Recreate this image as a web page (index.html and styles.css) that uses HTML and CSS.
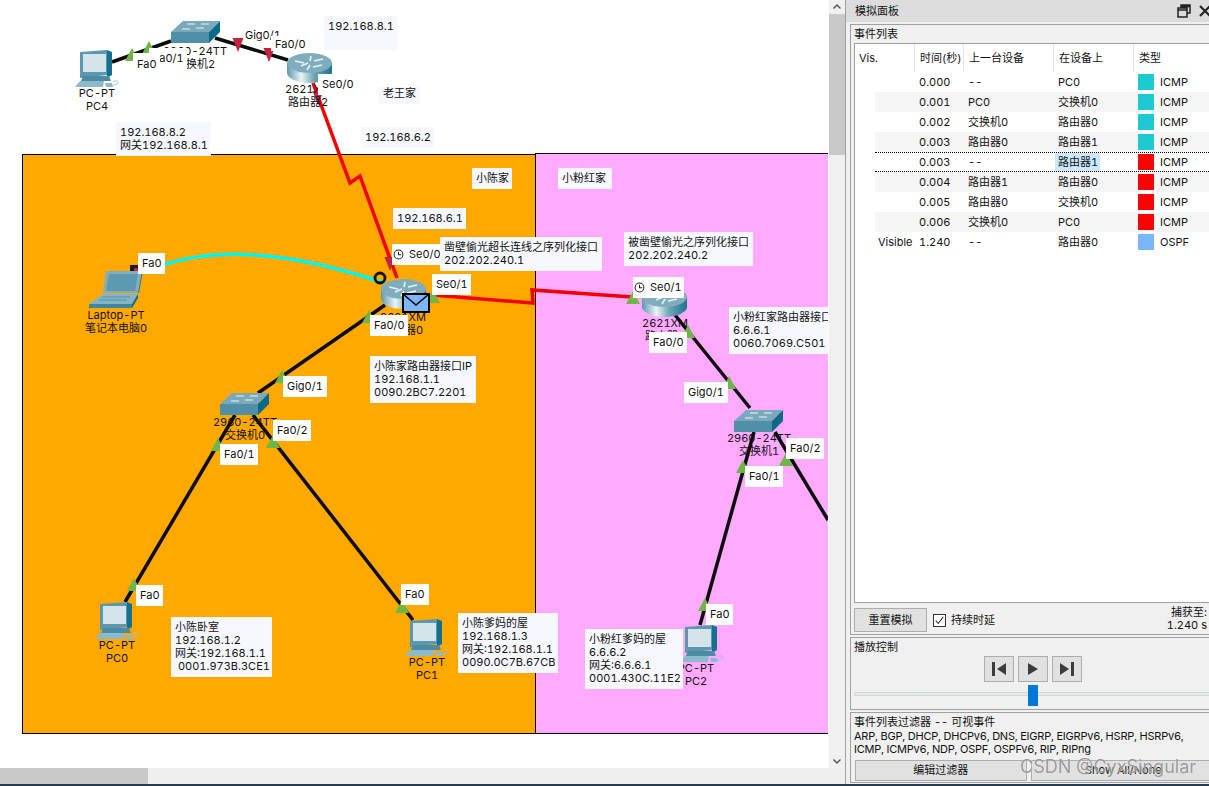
FILE: index.html
```html
<!DOCTYPE html>
<html lang="zh">
<head>
<meta charset="utf-8">
<title>模拟面板</title>
<link rel="stylesheet" href="styles.css">
</head>
<body>
<div class="app">
  <div class="work">
    <div class="work-row">
      <div class="canvas">
        <div class="room room-orange"></div>
        <div class="room room-pink"></div>
        <svg class="net" width="828" height="768" viewBox="0 0 828 768">
          <defs>
            <linearGradient id="cyl" x1="0" x2="1" y1="0" y2="0">
              <stop offset="0" stop-color="#5f98aa"/>
              <stop offset=".32" stop-color="#eaf4f6"/>
              <stop offset=".6" stop-color="#6fa6b6"/>
              <stop offset="1" stop-color="#1f7390"/>
            </linearGradient>
            <polygon id="up" points="-7,6 7,6 0,-7" fill="#6fb648"/>
            <polygon id="down" points="-5.500,-7 5.500,-7 0,7" fill="#c3233b"/>
            <symbol id="router" viewBox="0 0 45 30">
              <path d="M0 10v10c0 5 10 10 22.5 10S45 25 45 20V10z" fill="url(#cyl)"/>
              <ellipse cx="22.500" cy="10" rx="22.500" ry="10" fill="#7fadbd"/>
              <path d="M8 8l9 2M14 13l7-3M27 8l9-2M26 14l9-2M24 3l-1 5M23 12l-3 5" stroke="#e9f2f4" stroke-width="1.600" fill="none"/>
            </symbol>
            <symbol id="switch" viewBox="0 0 49 23">
              <polygon points="0,12 12,1 49,1 38,12" fill="#79a9bb"/>
              <polygon points="0,12 38,12 38,23 0,23" fill="#4f90a8"/>
              <polygon points="38,12 49,1 49,12 38,23" fill="#0b6a88"/>
              <path d="M16 4h8M30 4h8M11 9h8M25 8h8" stroke="#eef5f7" stroke-width="1.200"/>
            </symbol>
            <symbol id="pc" viewBox="0 0 44 37">
              <polygon points="5,2 32,0 32,25 5,28" fill="#5b97ad"/>
              <polygon points="32,0 37,2 37,25 32,28" fill="#14708e"/>
              <rect x="8" y="4" width="23" height="18" fill="#d5e3ea"/>
              <polygon points="8,26 34,26 36,31 6,31" fill="#4b8ba3"/>
              <polygon points="5,31 29,31 28,37 0,37" fill="#8dbacb"/>
              <path d="M30 33h7l1 4h-7z" fill="#8dbacb"/>
              <path d="M38 32c3-2 6-1 5 1s-3 1-5 2" stroke="#9fc3d0" fill="none"/>
            </symbol>
            <symbol id="laptop" viewBox="0 0 54 37">
              <polygon points="17,0 53,0 49,22 14,22" fill="#80aebf"/>
              <polygon points="20,3 49,3 46,20 17,20" fill="#5c9ab1"/>
              <polygon points="53,0 54,0 50,22 49,22" fill="#1d7a97"/>
              <polygon points="14,23 49,23 43,33 0,33" fill="#86b4c5"/>
              <polygon points="0,33 43,33 43,37 0,37" fill="#3f86a0"/>
              <polygon points="43,33 49,23 49,27 43,37" fill="#0e6c8a"/>
              <path d="M13 26h28M10 29h28" stroke="#4f90a8"/>
            </symbol>
          </defs>

          <path class="wire" d="M112 62L171 41M215 38L288 60M385 305L258 393M235 415L125 602M253 415L413 620M675 315L750 408M754 432L700 625M775 432L828 520"/>
          <path class="serial" d="M313 83L350 183L360 176L397 278M432 295L533 303L532 290L632 297"/>
          <path class="wifi" d="M160 266Q245 236 384 283"/>

          <use href="#up" x="132" y="55"/>
          <use href="#up" x="149" y="48"/>
          <use href="#down" x="238" y="45"/>
          <use href="#down" x="269" y="55"/>
          <use href="#down" x="318" y="98"/>
          <use href="#down" x="390" y="264"/>
          <use href="#up" x="433" y="297"/>
          <use href="#up" x="369" y="317"/>
          <use href="#up" x="633" y="298"/>
          <use href="#up" x="688" y="332"/>
          <use href="#up" x="729" y="383"/>
          <use href="#up" x="743" y="467"/>
          <use href="#up" x="786" y="460"/>
          <use href="#up" x="282" y="377"/>
          <use href="#up" x="218" y="445"/>
          <use href="#up" x="273" y="442"/>
          <use href="#up" x="134" y="585"/>
          <use href="#up" x="402" y="607"/>
          <use href="#up" x="705" y="605"/>

          <rect x="130" y="265" width="9" height="7" fill="#1a1a1a"/>
          <rect x="134" y="268" width="5" height="4" fill="#d0213c"/>
          <use href="#pc" x="75" y="50" width="44" height="37"/>
          <use href="#pc" x="95" y="602" width="44" height="37"/>
          <use href="#pc" x="405" y="619" width="44" height="37"/>
          <use href="#pc" x="680" y="625" width="44" height="37"/>
          <use href="#laptop" x="89" y="271" width="54" height="37"/>
          <use href="#switch" x="171" y="20" width="49" height="23"/>
          <use href="#switch" x="220" y="392" width="49" height="23"/>
          <use href="#switch" x="734" y="409" width="49" height="23"/>
          <use href="#router" x="287" y="53" width="45" height="30"/>
          <use href="#router" x="381" y="279" width="45" height="30"/>
          <use href="#router" x="642" y="287" width="45" height="30"/>
          <circle cx="380" cy="278" r="5" fill="none" stroke="#111" stroke-width="2.800"/>
        </svg>

        <div class="dev d-pc4">PC-PT<br>PC4</div>
        <div class="dev d-sw2">2960-24TT<br>交换机2</div>
        <div class="dev d-r2">2621XM<br>路由器2</div>
        <div class="dev d-lap">Laptop-PT<br>笔记本电脑0</div>
        <div class="dev d-r0">2621XM<br>路由器0</div>
        <div class="dev d-r1">2621XM<br>路由器1</div>
        <div class="dev d-sw0">2960-24TT<br>交换机0</div>
        <div class="dev d-sw1">2960-24TT<br>交换机1</div>
        <div class="dev d-pc0">PC-PT<br>PC0</div>
        <div class="dev d-pc1">PC-PT<br>PC1</div>
        <div class="dev d-pc2">PC-PT<br>PC2</div>

        <div class="port p-top1">Fa0/1</div>
        <div class="port p-top0">Fa0</div>
        <div class="port p-topg">Gig0/1</div>
        <div class="port p-topf">Fa0/0</div>
        <div class="port p-tops">Se0/0</div>
        <div class="port p-lap">Fa0</div>
        <div class="port p-r0s0"><svg class="clock" viewBox="0 0 12 12" width="11" height="11"><circle cx="6" cy="6" r="4.800"/><path d="M6 3v3.200h3"/></svg>Se0/0</div>
        <div class="port p-r0s1">Se0/1</div>
        <div class="port p-r0f">Fa0/0</div>
        <div class="port p-r1s"><svg class="clock" viewBox="0 0 12 12" width="11" height="11"><circle cx="6" cy="6" r="4.800"/><path d="M6 3v3.200h3"/></svg>Se0/1</div>
        <div class="port p-r1f">Fa0/0</div>
        <div class="port p-r1g">Gig0/1</div>
        <div class="port p-s1f2">Fa0/2</div>
        <div class="port p-s1f1">Fa0/1</div>
        <div class="port p-s0g">Gig0/1</div>
        <div class="port p-s0f2">Fa0/2</div>
        <div class="port p-s0f1">Fa0/1</div>
        <div class="port p-pc0">Fa0</div>
        <div class="port p-pc1">Fa0</div>
        <div class="port p-pc2">Fa0</div>

        <div class="note n-ip81">192.168.8.1<br>&nbsp;</div>
        <div class="note n-wang">老王家</div>
        <div class="note n-ip62">192.168.6.2</div>
        <div class="note n-pc4">192.168.8.2<br>网关192.168.8.1</div>
        <div class="note n-chen">小陈家</div>
        <div class="note n-pink">小粉红家</div>
        <div class="note n-ip61">192.168.6.1</div>
        <div class="note n-ser0">凿壁偷光超长连线之序列化接口<br>202.202.240.1</div>
        <div class="note n-rchen">小陈家路由器接口IP<br>192.168.1.1<br>0090.2BC7.2201</div>
        <div class="note n-ser1">被凿壁偷光之序列化接口<br>202.202.240.2</div>
        <div class="note n-rpink">小粉红家路由器接口IP<br>6.6.6.1<br>0060.7069.C501</div>
        <div class="note n-pc0">小陈卧室<br>192.168.1.2<br>网关:192.168.1.1<br>&nbsp;0001.973B.3CE1</div>
        <div class="note n-pc1">小陈爹妈的屋<br>192.168.1.3<br>网关:192.168.1.1<br>0090.0C7B.67CB</div>
        <div class="note n-pc2">小粉红爹妈的屋<br>6.6.6.2<br>网关:6.6.6.1<br>0001.430C.11E2</div>

        <svg class="mail" viewBox="0 0 28 20" width="28" height="20"><rect x="1" y="1" width="26" height="18" fill="#7db6fb" stroke="#000" stroke-width="2"/><path d="M1 1l13 11L27 1" fill="none" stroke="#000" stroke-width="1.500"/></svg>
      </div>
      <div class="vscroll">
        <svg class="arrow" viewBox="0 0 16 14" width="16" height="14"><path d="M4.500 8.500L8 5l3.500 3.500"/></svg>
        <div class="vthumb"></div>
        <div class="fill"></div>
        <svg class="arrow" viewBox="0 0 16 14" width="16" height="14"><path d="M4.500 5.500L8 9l3.500-3.500"/></svg>
      </div>
    </div>
    <div class="hscroll"><div class="hthumb"></div></div>
  </div>

  <aside class="panel">
    <div class="titlebar">
      <span>模拟面板</span>
      <span class="win-btns">
        <svg viewBox="0 0 14 14" width="14" height="14"><path d="M4 4V1h9v8h-3M1 4h9v9H1zM1 6h9M4 2.500h9" fill="none" stroke="#222" stroke-width="1.500"/></svg>
        <svg viewBox="0 0 14 14" width="14" height="14"><path d="M2 2l10 10M12 2L2 12" stroke="#222" stroke-width="2.200"/></svg>
      </span>
    </div>

    <section class="group group-events">
      <div class="group-title">事件列表</div>
      <div class="events">
        <div class="ev-head">
          <span class="h-vis">Vis.</span><span>时间(秒)</span><span>上一台设备</span><span>在设备上</span><span>类型</span>
        </div>
        <div class="ev-row"><span></span><span>0.000</span><span>--</span><span>PC0</span><span class="kind"><i class="sw sw-teal"></i>ICMP</span></div>
        <div class="ev-row alt"><span></span><span>0.001</span><span>PC0</span><span>交换机0</span><span class="kind"><i class="sw sw-teal"></i>ICMP</span></div>
        <div class="ev-row"><span></span><span>0.002</span><span>交换机0</span><span>路由器0</span><span class="kind"><i class="sw sw-teal"></i>ICMP</span></div>
        <div class="ev-row alt"><span></span><span>0.003</span><span>路由器0</span><span>路由器1</span><span class="kind"><i class="sw sw-teal"></i>ICMP</span></div>
        <div class="ev-row sel"><span></span><span>0.003</span><span>--</span><span><b class="hl">路由器1</b></span><span class="kind"><i class="sw sw-red"></i>ICMP</span></div>
        <div class="ev-row alt"><span></span><span>0.004</span><span>路由器1</span><span>路由器0</span><span class="kind"><i class="sw sw-red"></i>ICMP</span></div>
        <div class="ev-row"><span></span><span>0.005</span><span>路由器0</span><span>交换机0</span><span class="kind"><i class="sw sw-red"></i>ICMP</span></div>
        <div class="ev-row alt"><span></span><span>0.006</span><span>交换机0</span><span>PC0</span><span class="kind"><i class="sw sw-red"></i>ICMP</span></div>
        <div class="ev-row"><span class="vis">Visible</span><span>1.240</span><span>--</span><span>路由器0</span><span class="kind"><i class="sw sw-blue"></i>OSPF</span></div>
      </div>
      <div class="ev-foot">
        <button class="btn btn-reset">重置模拟</button>
        <label class="check"><span class="box"><svg viewBox="0 0 13 13" width="11" height="11"><path d="M2 6.500l3 3.500 6-8" fill="none" stroke="#222" stroke-width="1.200"/></svg></span>持续时延</label>
        <div class="capture">捕获至:<br>1.240 s</div>
      </div>
    </section>

    <section class="group group-play">
      <div class="group-title">播放控制</div>
      <div class="play-btns">
        <button class="pbtn"><svg viewBox="0 0 16 16" width="16" height="16"><path d="M1 1h3v14H1zM15 2v12L6 8z" fill="#3c3c3c"/></svg></button>
        <button class="pbtn"><svg viewBox="0 0 16 16" width="16" height="16"><path d="M3 2v12l10-6z" fill="#3c3c3c"/></svg></button>
        <button class="pbtn"><svg viewBox="0 0 16 16" width="16" height="16"><path d="M12 1h3v14h-3zM1 2v12l9-6z" fill="#3c3c3c"/></svg></button>
      </div>
      <div class="slider"><div class="track"></div><div class="thumb"></div></div>
    </section>

    <section class="group group-filter">
      <div class="group-title">事件列表过滤器 -- 可视事件</div>
      <div class="filter-text">ARP, BGP, DHCP, DHCPv6, DNS, EIGRP, EIGRPv6, HSRP, HSRPv6,<br>ICMP, ICMPv6, NDP, OSPF, OSPFv6, RIP, RIPng</div>
      <div class="filter-btns">
        <button class="btn btn-edit">编辑过滤器</button>
        <button class="btn btn-show">Show All/None</button>
      </div>
    </section>
    <div class="watermark">CSDN @CyxSingular</div>
  </aside>
</div>
<div class="taskbar"></div>
</body>
</html>
```

FILE: styles.css
```css
* { box-sizing: border-box; }
html, body { margin: 0; padding: 0; height: 786px; overflow: hidden; background: #fff; }
body, button {
  font-family: Inter, "Noto Sans CJK SC", sans-serif;
  font-size: 11px;
  line-height: 13px;
  color: #111;
  font-feature-settings: "tnum";
}
.app { display: flex; height: 784px; }
.taskbar { height: 2px; background: #2b3a4c; }

/* workspace */
.work { width: 845px; flex: none; display: flex; flex-direction: column; }
.work-row { display: flex; height: 768px; }
.canvas { position: relative; width: 828px; height: 768px; margin-right: 1px; overflow: hidden; background: #fff; }
.room { position: absolute; border: 1px solid #000; }
.room-orange { left: 22px; top: 154px; width: 514px; height: 580px; background: #ffa900; }
.room-pink { left: 535px; top: 153px; width: 310px; height: 581px; background: #ffaaff; }
.net { position: absolute; left: 0; top: 0; }
.wire, .serial, .wifi { fill: none; }
.wire { stroke: #0c0c0c; stroke-width: 3.5; }
.serial { stroke: #f50000; stroke-width: 3.5; }
.wifi { stroke: #00f5f0; stroke-width: 3.5; }

.vscroll { width: 16px; background: #f0f0f0; display: flex; flex-direction: column; }
.vthumb { height: 141px; background: #c9c9c9; }
.fill { flex: 1; }
.arrow { flex: none; fill: none; stroke: #505050; stroke-width: 1.4; }
.hscroll { height: 16px; background: #efefef; }
.hthumb { width: 148px; height: 100%; background: #c9c9c9; }

/* canvas text */
.dev { position: absolute; width: 100px; text-align: center; white-space: nowrap; }
.d-pc4 { left: 47px; top: 87px; }
.d-sw2 { left: 145px; top: 45px; }
.d-r2 { left: 258px; top: 83px; }
.d-lap { left: 66px; top: 309px; }
.d-r0 { left: 353px; top: 311px; }
.d-r1 { left: 615px; top: 317px; }
.d-sw0 { left: 195px; top: 416px; }
.d-sw1 { left: 709px; top: 432px; }
.d-pc0 { left: 67px; top: 639px; }
.d-pc1 { left: 377px; top: 656px; }
.d-pc2 { left: 646px; top: 662px; }

.port { position: absolute; height: 21px; padding: 4px; background: #fff; white-space: nowrap; display: flex; }
.clock { flex: none; margin: 1px 5px 0 0; fill: none; stroke: #222; stroke-width: 1.1; }
.p-top0 { left: 133px; top: 53px; width: 27px; padding-top: 5px; }
.p-top1 { left: 149px; top: 48px; width: 38px; }
.p-topg { left: 241px; top: 25px; width: 44px; background: none; }
.p-topf { left: 271px; top: 36px; width: 38px; height: 15px; padding-top: 2px; }
.p-tops { left: 318px; top: 74px; width: 38px; }
.p-lap { left: 138px; top: 253px; width: 27px; }
.p-r0s0 { left: 392px; top: 244px; width: 48px; padding-left: 1px; }
.p-r0s1 { left: 432px; top: 274px; width: 39px; }
.p-r0f { left: 370px; top: 315px; width: 38px; }
.p-r1s { left: 633px; top: 277px; width: 51px; padding-left: 1px; }
.p-r1f { left: 649px; top: 332px; width: 38px; }
.p-r1g { left: 684px; top: 382px; width: 44px; }
.p-s1f2 { left: 786px; top: 438px; width: 38px; }
.p-s1f1 { left: 745px; top: 466px; width: 38px; }
.p-s0g { left: 283px; top: 376px; width: 44px; }
.p-s0f2 { left: 273px; top: 420px; width: 38px; }
.p-s0f1 { left: 220px; top: 444px; width: 38px; }
.p-pc0 { left: 136px; top: 585px; width: 27px; }
.p-pc1 { left: 401px; top: 584px; width: 28px; }
.p-pc2 { left: 706px; top: 604px; width: 27px; }

.note { position: absolute; padding: 4px; background: #f6f8fe; white-space: nowrap; overflow: hidden; }
.n-ip81 { left: 324px; top: 16px; width: 73px; height: 34px; }
.n-wang { left: 379px; top: 87px; width: 41px; height: 17px; padding-top: 0; }
.n-ip62 { left: 361px; top: 127px; width: 73px; height: 21px; }
.n-pc4 { left: 116px; top: 122px; width: 95px; height: 34px; }
.n-chen { left: 472px; top: 168px; width: 40px; height: 21px; }
.n-pink { left: 558px; top: 168px; width: 54px; height: 21px; }
.n-ip61 { left: 393px; top: 208px; width: 73px; height: 21px; }
.n-ser0 { left: 440px; top: 237px; width: 162px; height: 34px; }
.n-rchen { left: 370px; top: 356px; width: 106px; height: 47px; }
.n-ser1 { left: 624px; top: 232px; width: 129px; height: 34px; }
.n-rpink { left: 729px; top: 307px; width: 110px; height: 47px; }
.n-pc0 { left: 171px; top: 617px; width: 101px; height: 60px; }
.n-pc1 { left: 458px; top: 613px; width: 100px; height: 60px; }
.n-pc2 { left: 585px; top: 629px; width: 98px; height: 60px; }
.mail { position: absolute; left: 402px; top: 293px; }

/* simulation panel */
.panel { position: relative; flex: 1; min-width: 0; overflow: hidden; background: #f0f0f0; border-left: 1px solid #a0a0a0; }
.titlebar { height: 22px; padding: 0 0 0 9px; background: #dcdcdc; display: flex; align-items: center; justify-content: space-between; }
.win-btns { display: flex; gap: 7px; margin-right: -3px; }
.group { border: 1px solid #a0a0a0; margin: 0 -8px 2px 4px; padding: 0 0 0 3px; }
.group-title { height: 18px; line-height: 18px; }
.group-events { margin-top: 2px; height: 611px; }
.events { height: 560px; background: #fff; border: 1px solid #a0a0a0; }
.ev-head, .ev-row { display: grid; grid-template-columns: 60px 49px 90px 80px 1fr; align-items: center; }
.ev-head { height: 28px; }
.ev-head span { height: 28px; line-height: 28px; padding-left: 5px; border-right: 1px solid #e4e4e4; }
.ev-head .h-vis { padding-left: 4px; }
.ev-row { height: 20px; margin-left: 20px; grid-template-columns: 40px 49px 90px 80px 1fr; }
.ev-row span { padding-left: 4px; white-space: nowrap; }
.ev-row .vis { padding-left: 3px; }
.alt { background: #f5f5f5; }
.sel { border-top: 1px dotted #000; border-bottom: 1px dotted #000; }
.hl { font-weight: normal; display: inline-block; height: 18px; line-height: 18px; margin-left: -3px; padding: 0 2px 0 3px; background: #cce8ff; }
.kind { display: flex; align-items: center; }
.sw { width: 16px; height: 16px; margin-right: 6px; flex: none; }
.sw-teal { background: #1fc9d1; }
.sw-red { background: #ff0000; }
.sw-blue { background: #7ab6fb; }

.ev-foot { display: flex; align-items: center; height: 31px; padding-top: 3px; position: relative; }
.btn { background: #e1e1e1; border: 1px solid #adadad; padding: 0; }
.btn-reset { width: 73px; height: 24px; margin-left: 0; }
.check { display: flex; align-items: center; margin-left: 6px; gap: 5px; }
.box { width: 13px; height: 13px; border: 1px solid #333; background: #fff; display: flex; align-items: center; justify-content: center; }
.capture { position: absolute; right: 9px; top: 3px; text-align: right; width: 60px; }

.group-play { height: 73px; position: relative; }
.group-play .group-title { height: 17px; line-height: 16px; padding-top: 1px; }
.play-btns { display: flex; gap: 4px; margin-left: 130px; margin-top: 1px; }
.pbtn { width: 30px; height: 26px; padding: 0; background: #e1e1e1; border: 1px solid #adadad; display: flex; align-items: center; justify-content: center; }
.slider { position: relative; height: 24px; margin-top: 3px; }
.track { position: absolute; left: 0; right: 0; top: 7px; height: 4px; background: #e7eae7; border: 1px solid #d4d8d4; }
.thumb { position: absolute; left: 174px; top: 0; width: 10px; height: 21px; background: #0078d7; }

.group-filter { height: 71px; }
.group-filter .group-title { height: 17px; line-height: 16px; padding-top: 1px; }
.filter-text { white-space: nowrap; letter-spacing: -.22px; }
.filter-btns { display: flex; gap: 4px; margin-top: 4px; }
.btn-edit { width: 176px; height: 21px; margin-left: 1px; }
.btn-show { width: 190px; height: 21px; }
.watermark { position: absolute; left: 174px; top: 756px; font-size: 18px; line-height: 22px; white-space: nowrap; color: rgba(110,110,110,.7); text-shadow: 0 0 1px #fff; }
```
